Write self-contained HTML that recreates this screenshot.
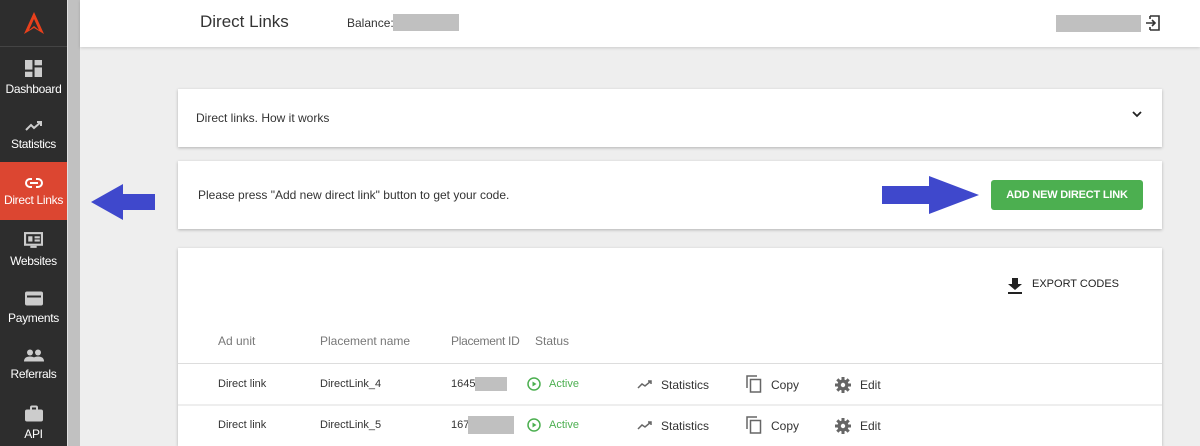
<!DOCTYPE html>
<html><head><meta charset="utf-8"><style>
*{box-sizing:border-box;margin:0;padding:0}
html,body{width:1200px;height:446px;overflow:hidden}
body{background:#eeeeee;font-family:"Liberation Sans",sans-serif;position:relative;color:#333}
.side{position:absolute;left:0;top:0;width:67px;height:446px;background:#2d2d2d;overflow:hidden}
.scroll{position:absolute;left:67px;top:0;width:13px;height:446px;background:#c1c1c1;border-left:1px solid #e0e0e0}
.logo{height:47px;border-bottom:1px solid #444;display:flex;justify-content:center;align-items:center}
.nav{height:57.5px;display:flex;flex-direction:column;align-items:center;justify-content:center;color:#fff;font-size:12px;letter-spacing:-0.3px;white-space:nowrap;padding-top:4px}
.nav svg{margin-bottom:5px}
.nav.act{background:#dc4631}
.hdr{position:absolute;left:80px;top:0;width:1120px;height:47px;background:#fff;box-shadow:0 1px 3px rgba(0,0,0,.15)}
.card{position:absolute;left:178px;width:984px;background:#fff;box-shadow:0 1px 3px rgba(0,0,0,.25)}
.grey{background:#c0c0c0;position:absolute}
.t{position:absolute;font-size:12px;color:#333;white-space:nowrap}
.h{color:#777}
.act2{color:#4caf50}
</style></head><body>
<div class="side">
 <div class="logo"><svg width="22" height="24" viewBox="0 0 22 24"><path d="M11 1 L21 23 L11 17 L1 23 Z M11 8 L6 19 L11 15 L16 19 Z" fill="#e8401c" fill-rule="evenodd"/></svg></div>
 <div class="nav"><svg width="17" height="17" viewBox="0 0 16 16" fill="#ccc"><rect x="0" y="0" width="7" height="9"/><rect x="9" y="0" width="7" height="5"/><rect x="0" y="11" width="7" height="5"/><rect x="9" y="7" width="7" height="9"/></svg>Dashboard</div>
 <div class="nav"><svg width="18" height="12" viewBox="0 0 18 12"><path d="M1 10 L6 5 L9 8 L16 2 M12 2 H16 V6" stroke="#ccc" stroke-width="2" fill="none"/></svg>Statistics</div>
 <div class="nav act"><svg width="18" height="10" viewBox="0 0 18 10"><rect x="1" y="1" width="16" height="8" rx="4" stroke="#fff" stroke-width="2" fill="none"/><rect x="5" y="4" width="8" height="2" fill="#fff"/><rect x="7" y="0" width="4" height="2" fill="#dc4631"/><rect x="7" y="8" width="4" height="2" fill="#dc4631"/></svg>Direct Links</div>
 <div class="nav"><svg width="19" height="17" viewBox="0 0 18 16"><rect x="1" y="1" width="16" height="11" stroke="#ccc" stroke-width="2" fill="none"/><rect x="4" y="4" width="4" height="5" fill="#ccc"/><rect x="10" y="4" width="5" height="2" fill="#ccc"/><rect x="10" y="7" width="5" height="2" fill="#ccc"/><rect x="6" y="13" width="6" height="2" fill="#ccc"/></svg>Websites</div>
 <div class="nav"><svg width="18" height="15" viewBox="0 0 18 14"><rect x="0" y="0" width="18" height="14" rx="2" fill="#ccc"/><rect x="2" y="4" width="14" height="2" fill="#2d2d2d"/></svg>Payments</div>
 <div class="nav"><svg width="20" height="13" viewBox="0 0 20 12" fill="#ccc"><circle cx="6" cy="3" r="3"/><circle cx="14" cy="3" r="3"/><path d="M0 12 Q0 7 6 7 Q12 7 12 12Z M8 12 Q8 7 14 7 Q20 7 20 12Z"/></svg>Referrals</div>
 <div class="nav"><svg width="18" height="17" viewBox="0 0 18 16" fill="#ccc"><rect x="0" y="4" width="18" height="12" rx="2"/><rect x="6" y="1" width="6" height="4" rx="1" stroke="#ccc" stroke-width="2" fill="none"/></svg>API</div>
</div>
<div class="scroll"></div>
<div class="hdr">
 <div class="t" style="left:120px;top:12px;font-size:17px;color:#333">Direct Links</div>
 <div class="t" style="left:267px;top:16px">Balance:</div>
 <div class="grey" style="left:313px;top:14px;width:66px;height:17px"></div>
 <div class="grey" style="left:976px;top:15px;width:85px;height:17px"></div>
 <svg style="position:absolute;left:1064px;top:15px" width="16" height="16" viewBox="0 0 16 16"><path d="M6 1 H15 V15 H6 M2 8 H11 M8 5 L11 8 L8 11 M6 1 V4 M6 12 V15" stroke="#333" stroke-width="1.6" fill="none"/></svg>
</div>
<div class="card" style="top:89px;height:58px">
 <div class="t" style="left:18px;top:22px;color:#333">Direct links. How it works</div>
 <svg style="position:absolute;left:954px;top:22px" width="10" height="7" viewBox="0 0 10 7"><path d="M1 1 L5 5 L9 1" stroke="#222" stroke-width="1.8" fill="none"/></svg>
</div>
<div class="card" style="top:161px;height:68px">
 <div class="t" style="left:20px;top:27px">Please press "Add new direct link" button to get your code.</div>
 <div style="position:absolute;left:813px;top:19px;width:152px;height:30px;background:#4caf50;border-radius:3px;color:#fff;font-size:11px;font-weight:bold;text-align:center;line-height:30px;letter-spacing:-0.2px">ADD NEW DIRECT LINK</div>
</div>
<svg style="position:absolute;left:90px;top:183px" width="66" height="38" viewBox="0 0 66 38"><path d="M1 19 L33 1 L33 11 L65 11 L65 27 L33 27 L33 37 Z" fill="#3f48cc"/></svg>
<svg style="position:absolute;left:882px;top:175px" width="98" height="40" viewBox="0 0 98 40"><path d="M0 11 L47 11 L47 1 L97 20 L47 39 L47 29 L0 29 Z" fill="#3f48cc"/></svg>
<div class="card" style="top:248px;height:198px;overflow:hidden">
 <svg style="position:absolute;left:830px;top:30px" width="14" height="16" viewBox="0 0 14 16"><path d="M4 0 H10 V6 H14 L7 12 L0 6 H4Z" fill="#222"/><rect x="0" y="14" width="14" height="2" fill="#222"/></svg>
 <div class="t" style="left:854px;top:30px;color:#222;font-size:11px">EXPORT CODES</div>
 <div class="t h" style="left:40px;top:86px">Ad unit</div>
 <div class="t h" style="left:142px;top:86px">Placement name</div>
 <div class="t h" style="left:273px;top:86px;letter-spacing:-0.3px">Placement ID</div>
 <div class="t h" style="left:357px;top:86px">Status</div>
 <div style="position:absolute;left:0;top:115px;width:984px;height:1px;background:#ddd"></div>
 <div style="position:absolute;left:0;top:156px;width:984px;height:2px;background:#eee"></div>
 <div class="t" style="left:40px;top:130px;font-size:11px">Direct link</div>
 <div class="t" style="left:142px;top:130px;font-size:11px">DirectLink_4</div>
 <div class="t" style="left:273px;top:130px;font-size:11px">1645</div>
 <div class="grey" style="left:297px;top:129px;width:32px;height:14px"></div>
 <div class="t" style="left:40px;top:171px;font-size:11px">Direct link</div>
 <div class="t" style="left:142px;top:171px;font-size:11px">DirectLink_5</div>
 <div class="t" style="left:273px;top:171px;font-size:11px">167</div>
 <div class="grey" style="left:290px;top:168px;width:46px;height:18px"></div>
 <svg style="position:absolute;left:349px;top:129px" width="14" height="14"><circle cx="7" cy="7" r="6" stroke="#4caf50" stroke-width="1.5" fill="none"/><path d="M5.5 4.5 L9.5 7 L5.5 9.5Z" fill="#4caf50"/></svg>
 <div class="t act2" style="left:371px;top:130px;font-size:11px">Active</div>
 <svg style="position:absolute;left:349px;top:170px" width="14" height="14"><circle cx="7" cy="7" r="6" stroke="#4caf50" stroke-width="1.5" fill="none"/><path d="M5.5 4.5 L9.5 7 L5.5 9.5Z" fill="#4caf50"/></svg>
 <div class="t act2" style="left:371px;top:171px;font-size:11px">Active</div>
 <svg style="position:absolute;left:459px;top:131px" width="16" height="10" viewBox="0 0 16 10"><path d="M1 9 L5 5 L8 7 L14 2 M11 2 H14 V5" stroke="#666" stroke-width="1.5" fill="none"/></svg>
 <div class="t" style="left:483px;top:130px">Statistics</div>
 <svg style="position:absolute;left:459px;top:172px" width="16" height="10" viewBox="0 0 16 10"><path d="M1 9 L5 5 L8 7 L14 2 M11 2 H14 V5" stroke="#666" stroke-width="1.5" fill="none"/></svg>
 <div class="t" style="left:483px;top:171px">Statistics</div>
 <svg style="position:absolute;left:568px;top:127px" width="16" height="18" viewBox="0 0 16 18"><path d="M1 13 V1 H11" stroke="#666" stroke-width="1.5" fill="none"/><rect x="4.5" y="4.5" width="10" height="12.5" stroke="#666" stroke-width="1.5" fill="none"/></svg>
 <div class="t" style="left:593px;top:130px">Copy</div>
 <svg style="position:absolute;left:568px;top:168px" width="16" height="18" viewBox="0 0 16 18"><path d="M1 13 V1 H11" stroke="#666" stroke-width="1.5" fill="none"/><rect x="4.5" y="4.5" width="10" height="12.5" stroke="#666" stroke-width="1.5" fill="none"/></svg>
 <div class="t" style="left:593px;top:171px">Copy</div>
 <svg style="position:absolute;left:657px;top:129px" width="16" height="16" viewBox="0 0 16 16"><circle cx="8" cy="8" r="5.5" fill="#666"/><g stroke="#666" stroke-width="3"><path d="M8 0 V16 M0 8 H16 M2.3 2.3 L13.7 13.7 M13.7 2.3 L2.3 13.7"/></g><circle cx="8" cy="8" r="2.2" fill="#fff"/></svg>
 <div class="t" style="left:682px;top:130px">Edit</div>
 <svg style="position:absolute;left:657px;top:170px" width="16" height="16" viewBox="0 0 16 16"><circle cx="8" cy="8" r="5.5" fill="#666"/><g stroke="#666" stroke-width="3"><path d="M8 0 V16 M0 8 H16 M2.3 2.3 L13.7 13.7 M13.7 2.3 L2.3 13.7"/></g><circle cx="8" cy="8" r="2.2" fill="#fff"/></svg>
 <div class="t" style="left:682px;top:171px">Edit</div>
</div>
</body></html>
